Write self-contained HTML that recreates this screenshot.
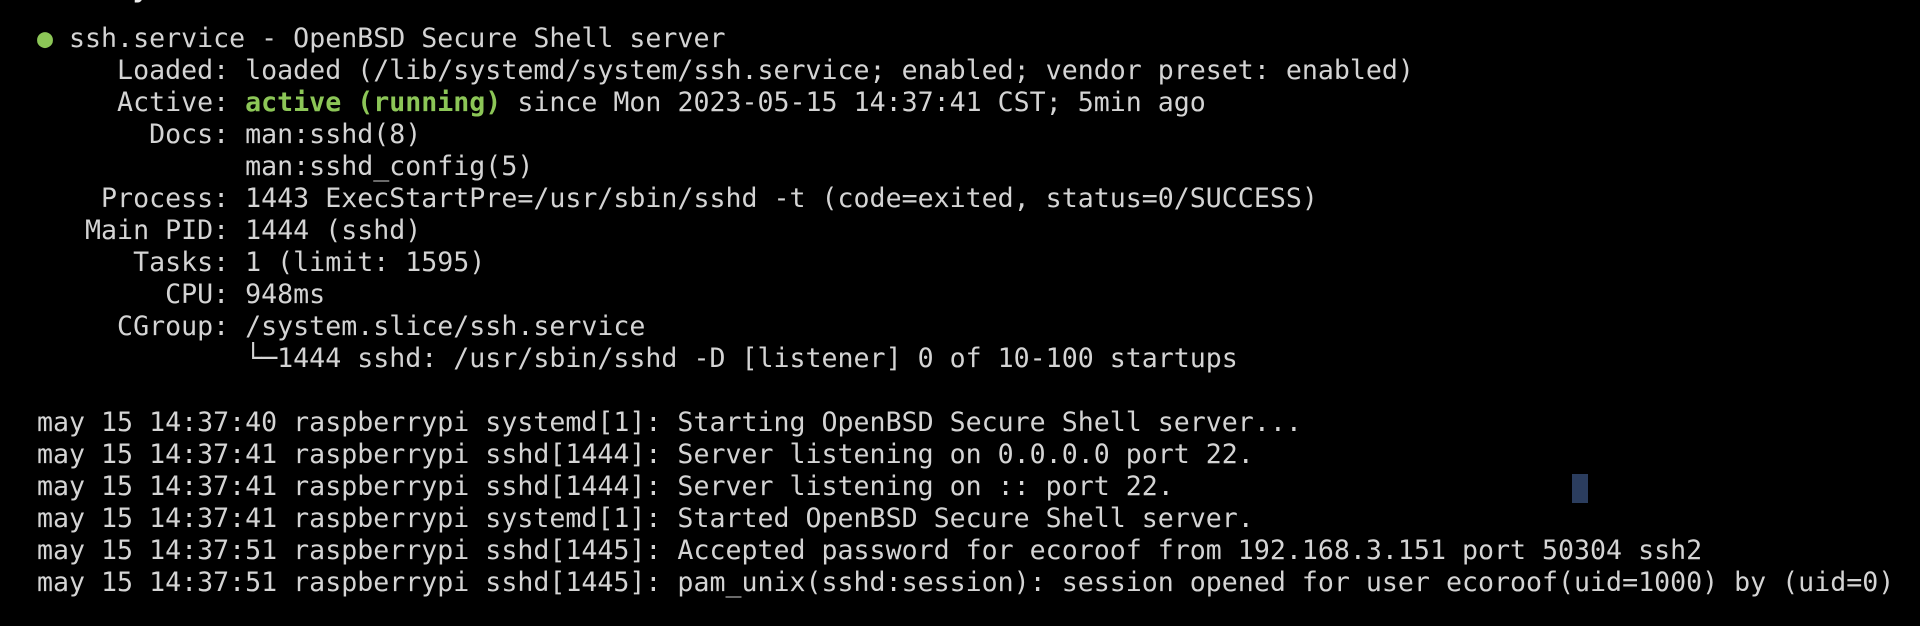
<!DOCTYPE html>
<html><head><meta charset="utf-8"><style>
html,body{margin:0;padding:0;background:#000;width:1920px;height:626px;overflow:hidden;}
pre{margin:0;position:absolute;left:37px;font-family:"DejaVu Sans Mono","Liberation Mono",monospace;font-size:26.6px;line-height:32px;color:#d4d4d4;}
.g{color:#8cc657;font-weight:bold;}
.b{color:#8cc657;}
.cur{position:absolute;left:1572px;top:474px;width:16px;height:29px;background:#2b3d5e;}
</style></head><body>
<pre style="top:-27px;font-weight:bold;color:#eee">sudo systemctl status ssh</pre>
<pre style="top:23px"><span class="b">●</span> ssh.service - OpenBSD Secure Shell server
     Loaded: loaded (/lib/systemd/system/ssh.service; enabled; vendor preset: enabled)
     Active: <span class="g">active (running)</span> since Mon 2023-05-15 14:37:41 CST; 5min ago
       Docs: man:sshd(8)
             man:sshd_config(5)
    Process: 1443 ExecStartPre=/usr/sbin/sshd -t (code=exited, status=0/SUCCESS)
   Main PID: 1444 (sshd)
      Tasks: 1 (limit: 1595)
        CPU: 948ms
     CGroup: /system.slice/ssh.service
             └─1444 sshd: /usr/sbin/sshd -D [listener] 0 of 10-100 startups

may 15 14:37:40 raspberrypi systemd[1]: Starting OpenBSD Secure Shell server...
may 15 14:37:41 raspberrypi sshd[1444]: Server listening on 0.0.0.0 port 22.
may 15 14:37:41 raspberrypi sshd[1444]: Server listening on :: port 22.
may 15 14:37:41 raspberrypi systemd[1]: Started OpenBSD Secure Shell server.
may 15 14:37:51 raspberrypi sshd[1445]: Accepted password for ecoroof from 192.168.3.151 port 50304 ssh2
may 15 14:37:51 raspberrypi sshd[1445]: pam_unix(sshd:session): session opened for user ecoroof(uid=1000) by (uid=0)</pre>
<div class="cur"></div>
</body></html>
